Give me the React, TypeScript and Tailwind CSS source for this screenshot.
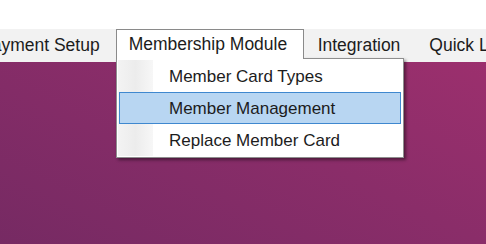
export default function App() {
  const items = ["Member Card Types", "Member Management", "Replace Member Card"];
  const active = 1;

  return (
    <div
      className="relative w-[486px] h-[244px] overflow-hidden bg-gradient-to-tr from-[#762a63] via-[#8a2d69] to-[#a2306f] text-[#1c1c1c] text-[17px] leading-none whitespace-nowrap"
      style={{ fontFamily: '"Liberation Sans", Arial, sans-serif' }}
    >
      <div className="h-[29px] bg-white" />

      {/* menubar */}
      <div className="flex h-[33px] bg-[#f2f2f2] -ml-[35px] text-[17.5px]">
        <div className="flex shrink-0 items-center pl-[15px] pr-[16px] h-full">Payment Setup</div>
        <div className="relative z-10 flex shrink-0 items-center w-[188px] h-[30px] pl-[12px] bg-white border-x border-t border-[#8a8a8a]">
          Membership Module
        </div>
        <div className="flex shrink-0 items-center px-[14px] h-full">Integration</div>
        <div className="flex shrink-0 items-center px-[15px] h-full">Quick Links</div>
      </div>

      {/* dropdown */}
      <div className="absolute z-[5] left-[116px] top-[58px] w-[288px] bg-white border border-[#8e8e8e] p-[1px] shadow-[2px_2px_3px_rgba(0,0,0,0.45)]">
        <div className="relative">
          <div className="absolute left-0 top-0 bottom-0 w-[35px] bg-gradient-to-r from-[#f3f3f3] via-[#ececec] to-[#f7f7f7]" />
          {items.map((label, i) => (
            <div
              key={label}
              className={
                i === active
                  ? "relative flex items-center h-[32px] mx-[1px] pl-[49px] bg-[#b8d6f2] border border-[#3f88cf]"
                  : "relative flex items-center h-[32px] mx-[1px] pl-[49px] border border-transparent"
              }
            >
              {label}
            </div>
          ))}
        </div>
      </div>
    </div>
  );
}
